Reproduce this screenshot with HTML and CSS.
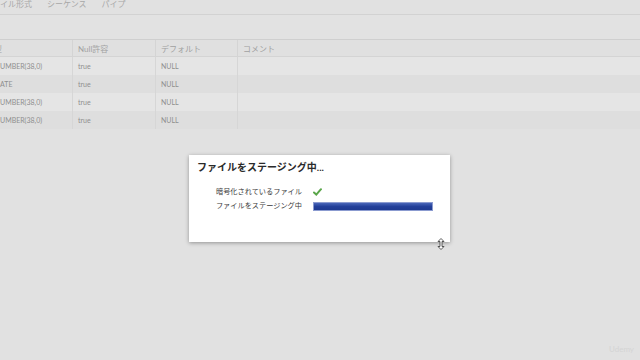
FILE: index.html
```html
<!DOCTYPE html>
<html lang="ja">
<head>
    <meta charset="UTF-8">
    <title>ファイルをステージング中</title>
    <link rel="stylesheet" href="styles.css">
</head>
<body>

<div class="tabs">
    <span class="tab first">イル形式</span>
    <span class="tab">シーケンス</span>
    <span class="tab">パイプ</span>
</div>
<div class="toolbar"></div>

<table class="columns">
    <thead>
        <tr>
            <th class="c1">型</th>
            <th class="c2">Null許容</th>
            <th class="c3">デフォルト</th>
            <th>コメント</th>
        </tr>
    </thead>
    <tbody>
        <tr><td class="cut">UMBER(38,0)</td><td>true</td><td>NULL</td><td></td></tr>
        <tr><td class="cut">ATE</td><td>true</td><td>NULL</td><td></td></tr>
        <tr><td class="cut">UMBER(38,0)</td><td>true</td><td>NULL</td><td></td></tr>
        <tr><td class="cut">UMBER(38,0)</td><td>true</td><td>NULL</td><td></td></tr>
    </tbody>
</table>

<div class="dialog">
    <h2>ファイルをステージング中...</h2>
    <div class="steps">
        <div class="step">
            <span class="label">暗号化されているファイル</span>
            <svg class="check" width="9" height="8" viewBox="0 0 9 8">
                <path d="M1 4.5 L3.3 6.6 L8 1.2" fill="none" stroke="#5aa64a" stroke-width="2" stroke-linecap="round"/>
            </svg>
        </div>
        <div class="step">
            <span class="label">ファイルをステージング中</span>
            <div class="bar"></div>
        </div>
    </div>
</div>

<svg class="cursor" width="8" height="12" viewBox="0 0 8 12">
    <path d="M4 0.5 L7 3.5 H5 V8.5 H7 L4 11.5 L1 8.5 H3 V3.5 H1 Z" fill="#fff" stroke="#333" stroke-width="0.8"/>
</svg>

<div class="watermark">Udemy</div>

</body>
</html>
```

FILE: styles.css
```css
body {
    margin: 0;
    background-color: #e1e1e1;
    font-family: 'Lato', 'Noto Sans CJK JP', sans-serif;
    color: #9a9a9a;
    height: 360px;
    overflow: hidden;
}

.tabs {
    display: flex;
    gap: 15px;
    height: 14px;
    border-bottom: 1px solid #d2d2d2;
    font-size: 8px;
    line-height: 9px;
    color: #a8a8a8;
}

.tab.first {
    margin-left: 0;
}

.toolbar {
    height: 24px;
    border-bottom: 1px solid #cfcfcf;
    background-color: #e2e2e2;
}

.columns {
    width: 100%;
    border-collapse: collapse;
    font-size: 7px;
    color: #8f8f8f;
}

.columns th {
    height: 16px;
    padding: 0 0 0 5px;
    text-align: left;
    font-weight: normal;
    font-size: 8px;
    color: #a0a0a0;
    border-bottom: 1px solid #d4d4d4;
    border-left: 1px solid #d4d4d4;
    background-color: #e0e0e0;
}

.columns th.c1 {
    width: 72px;
    padding-left: 0;
    border-left: none;
    text-indent: -6px;
}

.columns th.c2 {
    width: 77px;
}

.columns th.c3 {
    width: 76px;
}

.columns td {
    height: 18px;
    padding: 0 0 0 5px;
    border-left: 1px solid #d6d6d6;
}

.columns td.cut {
    padding-left: 0;
    border-left: none;
}

.columns tbody tr:nth-child(odd) {
    background-color: #e5e5e5;
}

.columns tbody tr:nth-child(even) {
    background-color: #dedede;
}

.dialog {
    position: absolute;
    left: 189px;
    top: 155px;
    width: 261px;
    height: 87px;
    box-sizing: border-box;
    padding: 5px 8px;
    background-color: #fff;
    box-shadow: 0 1px 4px rgba(0, 0, 0, 0.35);
    color: #333;
}

.dialog h2 {
    margin: 0;
    font-size: 10px;
    line-height: 14px;
    font-weight: bold;
    color: #2a2a2a;
}

.steps {
    margin-top: 12px;
    display: flex;
    flex-direction: column;
    gap: 2px;
}

.step {
    display: flex;
    align-items: center;
    height: 12px;
}

.label {
    width: 105px;
    text-align: right;
    font-size: 7.2px;
    line-height: 12px;
    color: #3a3a3a;
}

.check {
    margin-left: 11px;
}

.bar {
    margin-left: 11px;
    width: 120px;
    height: 9px;
    background: linear-gradient(#4965b8, #23409a 50%, #1f3a90);
    border: 1px solid #8b9bd0;
    box-sizing: border-box;
}

.cursor {
    position: absolute;
    left: 437px;
    top: 238px;
}

.watermark {
    position: absolute;
    right: 6px;
    bottom: 6px;
    font-size: 8px;
    color: #d4d4d4;
}
```
